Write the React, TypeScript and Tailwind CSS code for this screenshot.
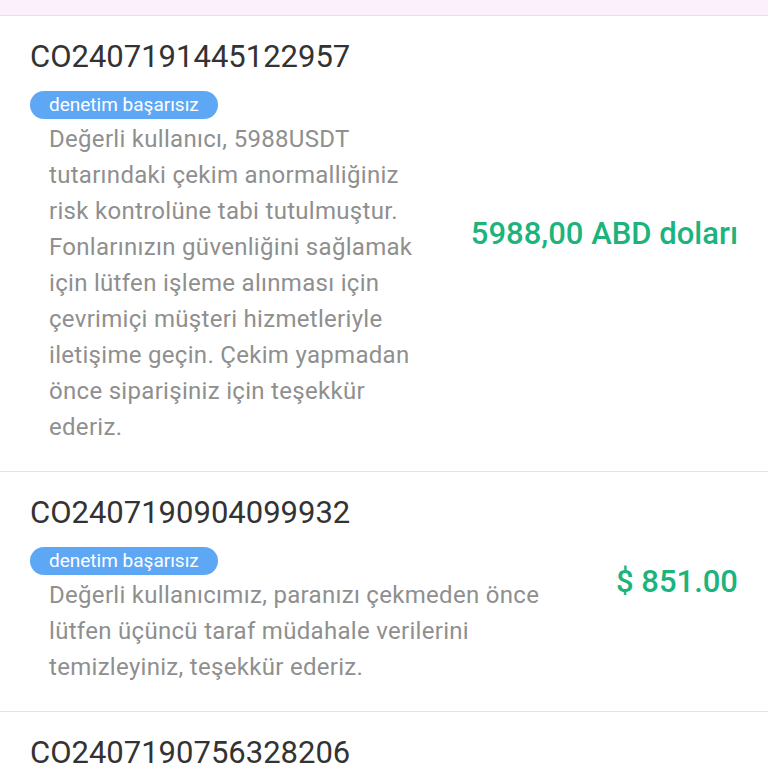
import React from 'react';

type Order = {
  id: string;
  status: string;
  note: string;
  amount: string;
};

const orders: Order[] = [
  {
    id: 'CO2407191445122957',
    status: 'denetim başarısız',
    note: 'Değerli kullanıcı, 5988USDT tutarındaki çekim anormalliğiniz risk kontrolüne tabi tutulmuştur. Fonlarınızın güvenliğini sağlamak için lütfen işleme alınması için çevrimiçi müşteri hizmetleriyle iletişime geçin. Çekim yapmadan önce siparişiniz için teşekkür ederiz.',
    amount: '5988,00 ABD doları',
  },
  {
    id: 'CO2407190904099932',
    status: 'denetim başarısız',
    note: 'Değerli kullanıcımız, paranızı çekmeden önce lütfen üçüncü taraf müdahale verilerini temizleyiniz, teşekkür ederiz.',
    amount: '$ 851.00',
  },
  {
    id: 'CO2407190756328206',
    status: 'denetim başarısız',
    note: 'Değerli kullanıcımız, paranızı çekmeden önce lütfen üçüncü taraf müdahale verilerini temizleyiniz, teşekkür ederiz.',
    amount: '$ 420.00',
  },
];

const OrderRow: React.FC<{ order: Order }> = ({ order }) => (
  <div className="flex items-center gap-[40px] border-b border-[#e3e3e3] pl-[30px] pr-[30px] pt-[23px] pb-[26px]">
    <div className="flex-1 min-w-0">
      <div className="text-[31px] leading-[36px] text-[#333333]">{order.id}</div>
      <div className="mt-4 inline-flex h-[28px] items-center rounded-full bg-[#5ea7f5] px-[19px] text-[19px] text-white">
        {order.status}
      </div>
      <p className="mt-[2px] pl-[19px] text-[24px] leading-[36px] tracking-[0.3px] text-[#8f8f8f]">{order.note}</p>
    </div>
    <div className="shrink-0 mb-4 text-[31px] font-medium text-[#1db37c]">{order.amount}</div>
  </div>
);

export default function App() {
  return (
    <div className="min-h-screen bg-white font-['Roboto',sans-serif]">
      <div className="h-[16px] bg-[#fbf0fb] border-b border-[#e6dfe6]" />
      {orders.map((o) => (
        <OrderRow key={o.id} order={o} />
      ))}
    </div>
  );
}
